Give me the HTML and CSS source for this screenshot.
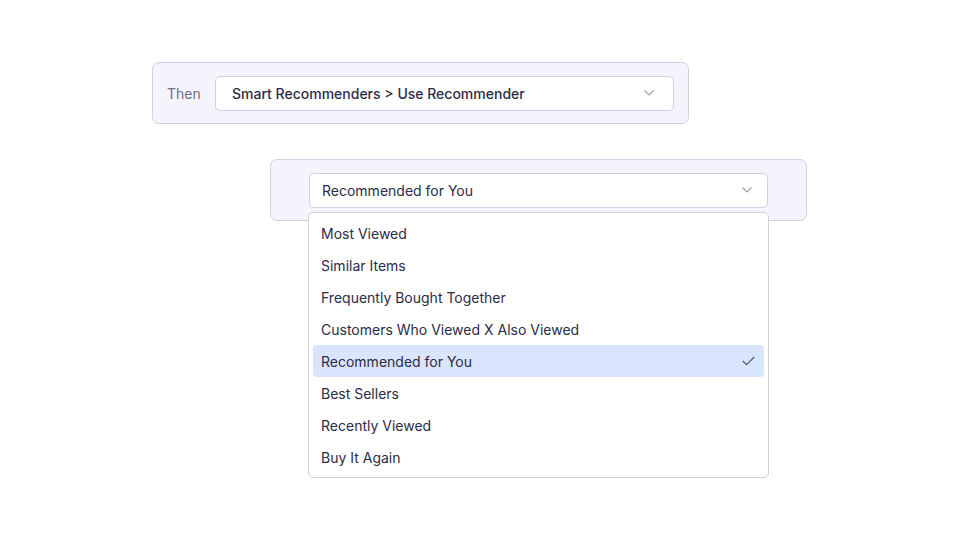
FILE: index.html
```html
<!DOCTYPE html>
<html>
<head>
<meta charset="utf-8">
<link rel="stylesheet" href="styles.css">
</head>
<body>
<div class="canvas">
  <div class="panel panel-then">
    <span class="then">Then</span>
    <div class="select strong">
      <span>Smart Recommenders &gt; Use Recommender</span>
      <svg class="chev" width="10" height="6" viewBox="0 0 10 6"><path d="M0.5 0.5 L5 5 L9.5 0.5" fill="none" stroke="#9a9bb0" stroke-width="1.1"/></svg>
    </div>
  </div>
  <div class="panel panel-rec">
    <div class="select-wrap">
      <div class="select">
        <span>Recommended for You</span>
        <svg class="chev" width="10" height="6" viewBox="0 0 10 6"><path d="M0.5 0.5 L5 5 L9.5 0.5" fill="none" stroke="#9a9bb0" stroke-width="1.1"/></svg>
      </div>
      <ul class="menu">
        <li>Most Viewed</li>
        <li>Similar Items</li>
        <li>Frequently Bought Together</li>
        <li>Customers Who Viewed X Also Viewed</li>
        <li class="active">Recommended for You
          <svg class="check" width="13" height="10" viewBox="0 0 13 10"><path d="M0.8 5 L4.5 8.7 L12.2 1" fill="none" stroke="#5b5c72" stroke-width="1.3"/></svg>
        </li>
        <li>Best Sellers</li>
        <li>Recently Viewed</li>
        <li>Buy It Again</li>
      </ul>
    </div>
  </div>
</div>
</body>
</html>
```

FILE: styles.css
```css
* { box-sizing: border-box; }
html, body { margin: 0; padding: 0; background: #ffffff; }
body {
  font-family: Inter, "Noto Sans", sans-serif;
  font-size: 14px;
  color: #2b2c48;
  width: 960px;
  height: 540px;
  overflow: hidden;
}
.canvas {
  padding: 62px 0 0 152px;
}
.panel {
  width: 537px;
  height: 62px;
  background: #f4f4fd;
  border: 1px solid #cfd0e3;
  border-radius: 7px;
  display: flex;
  align-items: center;
}
.panel-then {
  padding: 0 14px 0 14px;
  gap: 14px;
}
.then {
  color: #6e6f86;
  font-size: 14px;
  width: 34px;
}
.select {
  height: 35px;
  background: #ffffff;
  border: 1px solid #cfd0e3;
  border-radius: 5px;
  display: flex;
  align-items: center;
  justify-content: space-between;
  padding: 0 19px 0 16px;
  flex: 1;
}
.select.strong { font-weight: 500; }
.panel-rec {
  margin: 35px 0 0 118px;
  padding: 0 38px 0 38px;
}
.select-wrap {
  position: relative;
  flex: 1;
}
.panel-rec .select {
  padding: 0 15px 0 12px;
}
.chev { display: block; }
.menu {
  position: absolute;
  top: 39px;
  left: -1px;
  right: -1px;
  margin: 0;
  list-style: none;
  background: #ffffff;
  border: 1px solid #cfd0e3;
  border-radius: 5px;
  padding: 4px;
}
.menu li {
  height: 32px;
  display: flex;
  align-items: center;
  justify-content: space-between;
  padding: 1px 9px 0 8px;
  border-radius: 4px;
  color: #2b2c48;
}
.menu li.active {
  background: #d9e5fd;
}
.check { display: block; }
```
